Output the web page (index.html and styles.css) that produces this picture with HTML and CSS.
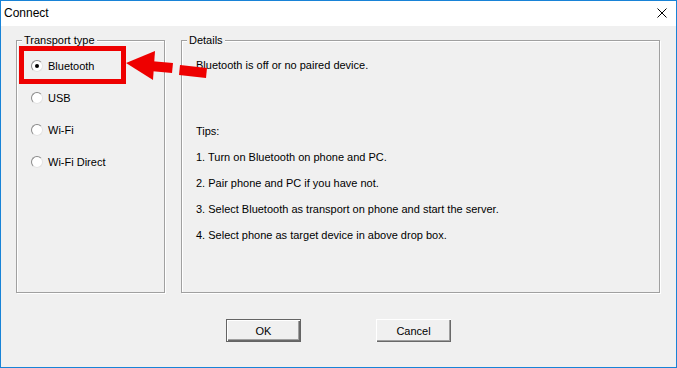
FILE: index.html
```html
<!DOCTYPE html>
<html lang="en">
<head>
    <meta charset="UTF-8">
    <title>Connect</title>
    <link rel="stylesheet" href="styles.css">
</head>
<body>
    <div class="window">
        <div class="titlebar">
            <span class="title">Connect</span>
            <svg class="close" width="10" height="10" viewBox="0 0 10 10">
                <path d="M0.5 0.5 L9.5 9.5 M9.5 0.5 L0.5 9.5" stroke="#000" stroke-width="1" fill="none"/>
            </svg>
        </div>

        <div class="content">
            <div class="groups">
                <div class="group transport">
                    <span class="group-title">Transport type</span>
                    <div class="radio-row">
                        <span class="radio checked"></span>
                        <span>Bluetooth</span>
                    </div>
                    <div class="radio-row">
                        <span class="radio"></span>
                        <span>USB</span>
                    </div>
                    <div class="radio-row">
                        <span class="radio"></span>
                        <span>Wi-Fi</span>
                    </div>
                    <div class="radio-row">
                        <span class="radio"></span>
                        <span>Wi-Fi Direct</span>
                    </div>
                </div>

                <div class="group details">
                    <span class="group-title">Details</span>
                    <p class="status">Bluetooth is off or no paired device.</p>
                    <div class="tips">
                        <p>Tips:</p>
                        <p>1. Turn on Bluetooth on phone and PC.</p>
                        <p>2. Pair phone and PC if you have not.</p>
                        <p>3. Select Bluetooth as transport on phone and start the server.</p>
                        <p>4. Select phone as target device in above drop box.</p>
                    </div>
                </div>
            </div>

            <div class="buttons">
                <button class="btn default">OK</button>
                <button class="btn">Cancel</button>
            </div>
        </div>

        <!-- annotation -->
        <div class="highlight"></div>
        <svg class="arrow" width="95" height="42" viewBox="120 44 95 42">
            <polygon points="126,63 155,51 153,80" fill="#ee0000"/>
            <polygon points="150,61 173,63 172,73 150,71" fill="#ee0000"/>
            <polygon points="180,65 207,68 206,78 179,75" fill="#ee0000"/>
        </svg>
    </div>
</body>
</html>
```

FILE: styles.css
```css
* {
    margin: 0;
    padding: 0;
    box-sizing: border-box;
}

body {
    background: #f0f0f0;
    font-family: 'Liberation Sans', Arial, sans-serif;
    font-size: 11px;
    color: #000;
}

.window {
    position: relative;
    width: 677px;
    height: 368px;
    border: 1px solid #1883d7;
    background: #f0f0f0;
}

.titlebar {
    height: 25px;
    background: #fff;
    display: flex;
    align-items: center;
    justify-content: space-between;
    padding: 0 9px 1px 3px;
}

.title {
    font-size: 12px;
}

.content {
    padding: 14px 15px 0 15px;
}

.groups {
    display: flex;
    gap: 16px;
}

.group {
    position: relative;
    height: 253px;
    border: 1px solid #a0a0a0;
    box-shadow: inset 1px 1px #fff, 1px 1px #fff;
    padding: 16px 14px 0 14px;
}

.group-title {
    position: absolute;
    top: -8px;
    left: 5px;
    padding: 0 2px;
    background: #f0f0f0;
    line-height: 14px;
}

.transport {
    width: 149px;
    display: flex;
    flex-direction: column;
    gap: 16px;
    padding-top: 17px;
}

.details {
    width: 479px;
}

.radio-row {
    display: flex;
    align-items: center;
    gap: 5px;
    height: 16px;
}

.radio {
    width: 12px;
    height: 12px;
    border-radius: 50%;
    background: #fff;
    border: 1px solid;
    border-color: #8a8a8a #e3e3e3 #e3e3e3 #8a8a8a;
    position: relative;
}

.radio.checked::after {
    content: '';
    position: absolute;
    left: 3px;
    top: 3px;
    width: 4px;
    height: 4px;
    border-radius: 50%;
    background: #000;
}

.details p {
    line-height: 16px;
}

.tips {
    margin-top: 50px;
    display: flex;
    flex-direction: column;
    gap: 10px;
}

.buttons {
    display: flex;
    justify-content: center;
    gap: 75px;
    margin-top: 26px;
}

.btn {
    width: 75px;
    height: 23px;
    font-family: inherit;
    font-size: 11px;
    color: #000;
    background: #f0f0f0;
    border: none;
    box-shadow: inset 1px 1px #fff, inset -1px -1px #696969, inset -2px -2px #a0a0a0;
}

.btn.default {
    border: 1px solid #646464;
}

.highlight {
    position: absolute;
    left: 18px;
    top: 45px;
    width: 107px;
    height: 38px;
    border: 5px solid #ee0000;
}

.arrow {
    position: absolute;
    left: 119px;
    top: 43px;
}
```
